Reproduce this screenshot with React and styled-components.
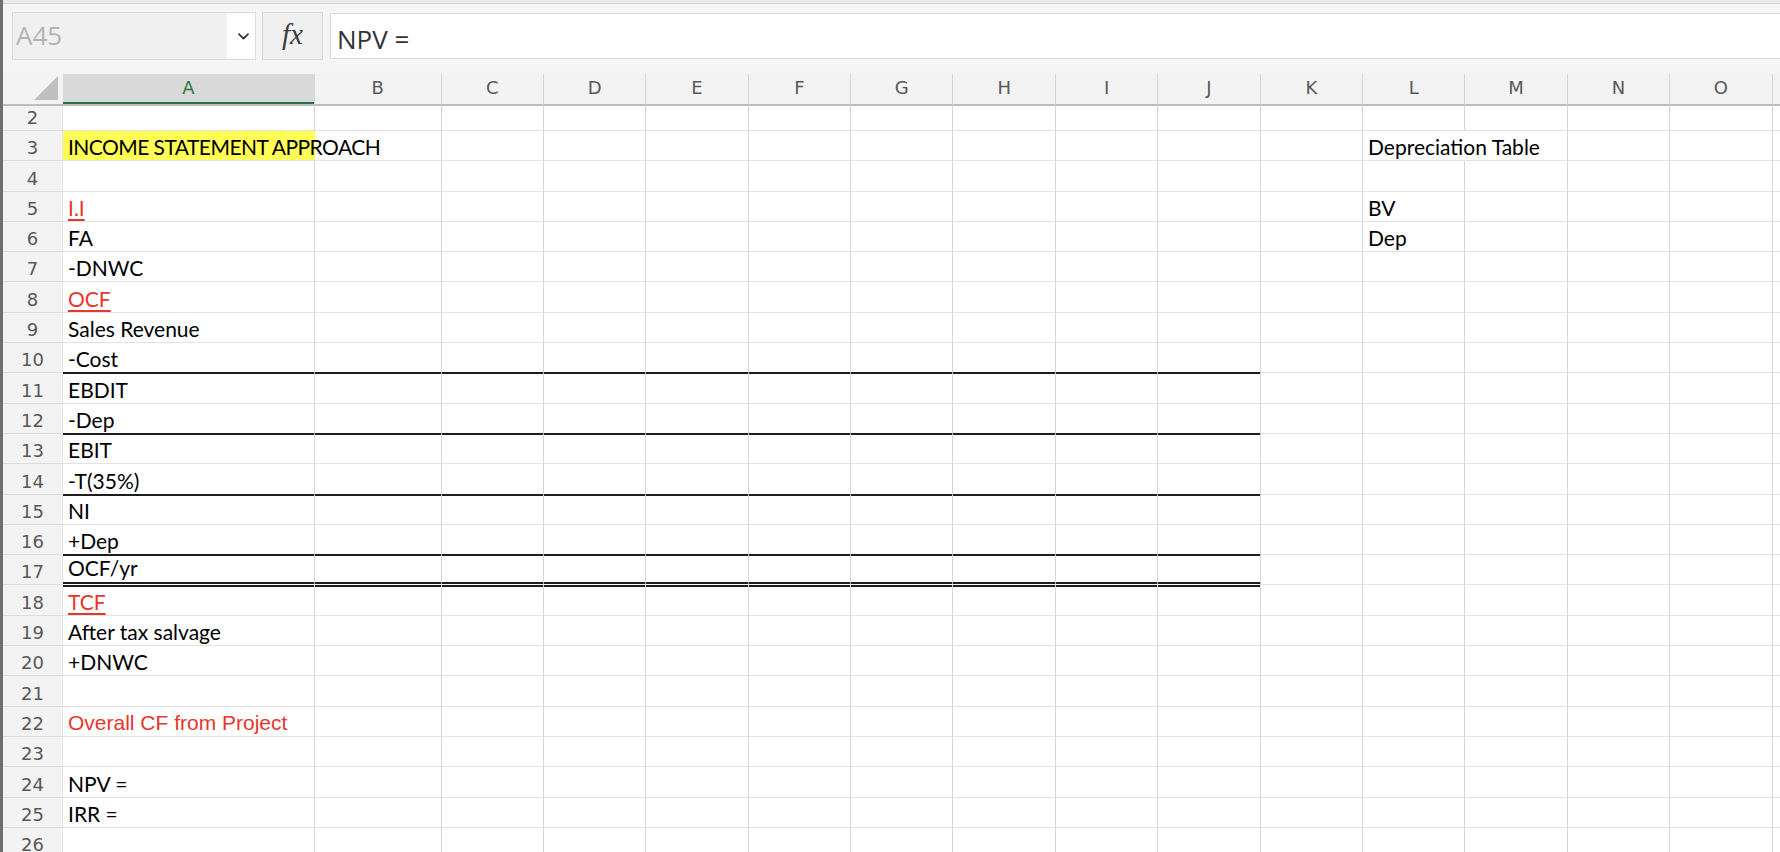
import React from 'react';
import styled, { createGlobalStyle, css } from 'styled-components';

const GlobalStyle = createGlobalStyle`
  html, body {
    margin: 0;
    padding: 0;
    background: #fff;
    overflow: hidden;
  }

  #root {
    height: 852px;
  }
`;

const Window = styled.div`
  box-sizing: border-box;
  display: flex;
  flex-direction: column;
  height: 852px;
  border-left: 3px solid #6f6f6f;
  background: #fff;
  overflow: hidden;
`;

const TopEdge = styled.div`
  height: 3px;
  background: #eaeaea;
  border-bottom: 1px solid #d5d5d5;
`;

const Toolbar = styled.div`
  display: flex;
  align-items: flex-start;
  height: 48px;
  padding: 8px 0 14px 9px;
  background: #f5f5f5;
`;

const NameBox = styled.div`
  box-sizing: border-box;
  display: flex;
  width: 244px;
  height: 48px;
  border: 1px solid #dadada;
  background: #f0f0f0;
`;

const NameText = styled.div`
  flex: 1;
  display: flex;
  align-items: flex-end;
  padding: 0 0 6px 3px;
  font-family: 'Open Sans', 'Liberation Sans', sans-serif;
  font-size: 26px;
  color: #b4b4b4;
`;

const Dropdown = styled.div`
  display: flex;
  align-items: center;
  justify-content: center;
  width: 28px;
  padding-left: 4px;
  box-sizing: border-box;
  background: #fff;
`;

const FxButton = styled.div`
  box-sizing: border-box;
  display: flex;
  align-items: center;
  justify-content: center;
  width: 61px;
  height: 48px;
  margin-left: 6px;
  border: 1px solid #dadada;
  background: #f0f0f0;
  font-family: 'Liberation Serif', 'DejaVu Serif', serif;
  font-style: italic;
  font-size: 29px;
  color: #3c3c3c;
  padding-bottom: 3px;
`;

const FormulaInput = styled.div`
  box-sizing: border-box;
  flex: 1;
  display: flex;
  align-items: flex-end;
  height: 46px;
  margin: 1px 0 0 7px;
  padding: 0 0 1px 6px;
  border: 1px solid #dadada;
  border-right: none;
  background: #fff;
  font-family: 'Open Sans', 'Liberation Sans', sans-serif;
  font-size: 26px;
  color: #333;
`;

const Sheet = styled.div`
  display: grid;
  grid-template-columns: 60px 252px 126.5px repeat(14, 102.4px);
  grid-template-rows: 32px 25px;
  grid-auto-rows: 30.3px;
  flex: 1;
  overflow: hidden;
  background: #fff;
`;

const Corner = styled.div`
  box-sizing: border-box;
  display: flex;
  align-items: flex-end;
  justify-content: flex-end;
  padding: 0 5px 4px 0;
  background: #f3f3f3;
  border-bottom: 2px solid #bdbdbd;

  &::after {
    content: '';
    width: 24px;
    height: 24px;
    background: #c0c0c0;
    clip-path: polygon(100% 0, 100% 100%, 0 100%);
  }
`;

const ColHeader = styled.div`
  box-sizing: border-box;
  display: flex;
  align-items: center;
  justify-content: center;
  padding-bottom: 4px;
  background: #f3f3f3;
  border-right: 1px solid #d6d6d6;
  border-bottom: 2px solid #bdbdbd;
  font-family: 'DejaVu Sans', 'Liberation Sans', sans-serif;
  font-size: 18px;
  color: #585858;

  ${({ $selected }) =>
    $selected &&
    css`
      background: #d9d9d9;
      color: #2c7744;
      box-shadow: inset 0 -2px 0 #217346;
    `}
`;

const RowHeader = styled.div`
  box-sizing: border-box;
  display: flex;
  align-items: flex-end;
  justify-content: center;
  padding-bottom: 2px;
  background: #f3f3f3;
  border-right: 1px solid #e6e6e6;
  border-bottom: 1px solid #dcdcdc;
  font-family: 'DejaVu Sans', 'Liberation Sans', sans-serif;
  font-size: 18px;
  line-height: 20px;
  color: #585858;
`;

const edgeStyles = {
  thick: css`
    border-bottom: 2px solid #1e1e1e;
    margin-bottom: -1px;
  `,
  double: css`
    border-bottom: 5px double #1e1e1e;
    margin-bottom: -2px;
    padding-bottom: 4px;
  `,
};

const Cell = styled.div`
  box-sizing: border-box;
  display: flex;
  align-items: flex-end;
  min-width: 0;
  padding: 0 0 3px 5px;
  border-right: 1px solid #d5d5d5;
  border-bottom: 1px solid #e2e2e2;
  white-space: nowrap;
  overflow: visible;
  background: ${({ $fill }) => ($fill ? '#ffff55' : 'transparent')};
  ${({ $open, $fill }) =>
    $open &&
    css`
      border-right-color: ${$fill ? '#ffff55' : 'transparent'};
    `}
  ${({ $edge }) => $edge && edgeStyles[$edge]}
`;

const CellText = styled.span`
  font-family: ${({ $arial }) =>
    $arial ? "'Liberation Sans', Arial, sans-serif" : "Lato, 'Open Sans', sans-serif"};
  font-size: 21px;
  line-height: 21px;
  letter-spacing: ${({ $caps }) => ($caps ? '-0.55px' : 'normal')};
  color: ${({ $red }) => ($red ? '#e8362c' : '#000')};
  ${({ $underline }) =>
    $underline &&
    css`
      text-decoration: underline;
      text-decoration-thickness: 1.5px;
      text-underline-offset: 3px;
    `}
`;

const COLUMNS = ['A', 'B', 'C', 'D', 'E', 'F', 'G', 'H', 'I', 'J', 'K', 'L', 'M', 'N', 'O', 'P'];

// rules under the statement lines run from A through J
const RULED_COLUMNS = 10;

const ROWS = [
  { n: 2 },
  {
    n: 3,
    cells: {
      A: { text: 'INCOME STATEMENT APPROACH', fill: true, open: true, caps: true },
      L: { text: 'Depreciation Table', open: true },
    },
  },
  { n: 4 },
  { n: 5, cells: { A: { text: 'I.I', red: true, underline: true }, L: { text: 'BV' } } },
  { n: 6, cells: { A: { text: 'FA' }, L: { text: 'Dep' } } },
  { n: 7, cells: { A: { text: '-DNWC' } } },
  { n: 8, cells: { A: { text: 'OCF', red: true, underline: true } } },
  { n: 9, cells: { A: { text: 'Sales Revenue' } } },
  { n: 10, cells: { A: { text: '-Cost' } }, edge: 'thick' },
  { n: 11, cells: { A: { text: 'EBDIT' } } },
  { n: 12, cells: { A: { text: '-Dep' } }, edge: 'thick' },
  { n: 13, cells: { A: { text: 'EBIT' } } },
  { n: 14, cells: { A: { text: '-T(35%)' } }, edge: 'thick' },
  { n: 15, cells: { A: { text: 'NI' } } },
  { n: 16, cells: { A: { text: '+Dep' } }, edge: 'thick' },
  { n: 17, cells: { A: { text: 'OCF/yr' } }, edge: 'double' },
  { n: 18, cells: { A: { text: 'TCF', red: true, underline: true } } },
  { n: 19, cells: { A: { text: 'After tax salvage' } } },
  { n: 20, cells: { A: { text: '+DNWC' } } },
  { n: 21 },
  { n: 22, cells: { A: { text: 'Overall CF from Project', red: true, arial: true } } },
  { n: 23 },
  { n: 24, cells: { A: { text: 'NPV =' } } },
  { n: 25, cells: { A: { text: 'IRR =' } } },
  { n: 26 },
];

function Chevron() {
  return (
    <svg width="11" height="7" viewBox="0 0 11 7" fill="none">
      <path d="M1 1.2 L5.5 5.6 L10 1.2" stroke="#333" strokeWidth="1.7" strokeLinecap="round" strokeLinejoin="round" />
    </svg>
  );
}

function SheetRow({ row }) {
  return (
    <>
      <RowHeader>{row.n}</RowHeader>
      {COLUMNS.map((col, i) => {
        const cell = (row.cells && row.cells[col]) || {};
        return (
          <Cell
            key={col}
            $fill={cell.fill}
            $open={cell.open}
            $edge={i < RULED_COLUMNS ? row.edge : undefined}
          >
            {cell.text && (
              <CellText
                $red={cell.red}
                $underline={cell.underline}
                $arial={cell.arial}
                $caps={cell.caps}
              >
                {cell.text}
              </CellText>
            )}
          </Cell>
        );
      })}
    </>
  );
}

export default function App() {
  return (
    <>
      <GlobalStyle />
      <Window>
        <TopEdge />
        <Toolbar>
          <NameBox>
            <NameText>A45</NameText>
            <Dropdown>
              <Chevron />
            </Dropdown>
          </NameBox>
          <FxButton>fx</FxButton>
          <FormulaInput>NPV =</FormulaInput>
        </Toolbar>
        <Sheet>
          <Corner />
          {COLUMNS.map((col) => (
            <ColHeader key={col} $selected={col === 'A'}>
              {col}
            </ColHeader>
          ))}
          {ROWS.map((row) => (
            <SheetRow key={row.n} row={row} />
          ))}
        </Sheet>
      </Window>
    </>
  );
}
